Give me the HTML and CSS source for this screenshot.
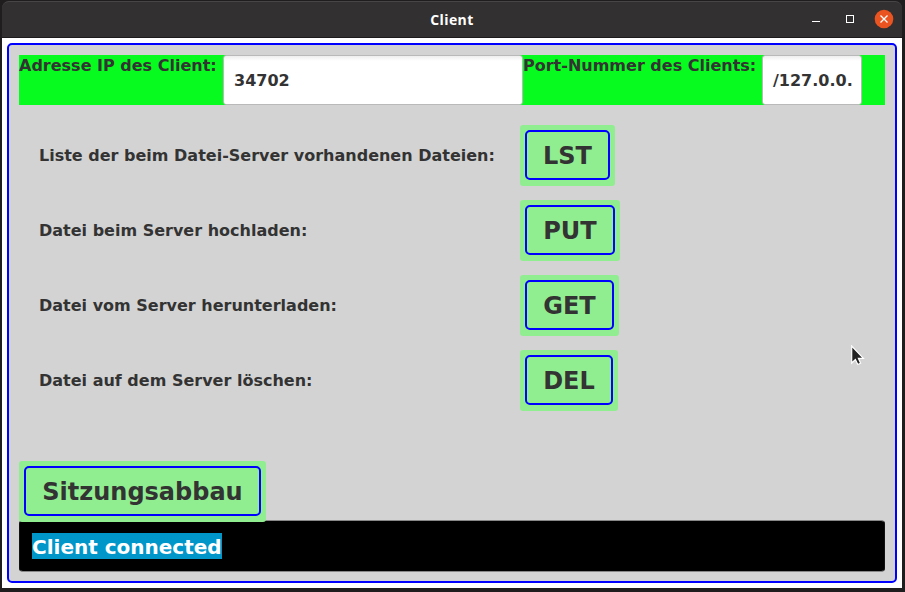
FILE: index.html
```
<!DOCTYPE html>
<html lang="de">
<head>
<meta charset="utf-8">
<title>Client</title>
<link rel="stylesheet" href="styles.css">
</head>
<body>
<div class="window">
  <header class="titlebar">
    <span class="title">Client</span>
    <svg class="controls" width="90" height="35" viewBox="0 0 90 35">
      <path d="M5 19.5h8" stroke="#fff" fill="none"/>
      <rect x="39.5" y="13.5" width="7" height="7" stroke="#fff" fill="none"/>
      <circle cx="77" cy="17" r="9.3" fill="#e95420"/>
      <path d="M73.5 13.5l7 7m0-7l-7 7" stroke="#fff" stroke-width="1.3" fill="none"/>
    </svg>
  </header>
  <main class="content">
    <div class="frame">
      <div class="address">
        <span class="label ip">Adresse IP des Client:</span>
        <div class="field wide">34702</div>
        <span class="label port">Port-Nummer des Clients:</span>
        <div class="field narrow">/127.0.0.</div>
      </div>
      <div class="commands">
        <span>Liste der beim Datei-Server vorhandenen Dateien:</span>
        <button class="btn lst"><b>LST</b></button>
        <span>Datei beim Server hochladen:</span>
        <button class="btn put"><b>PUT</b></button>
        <span>Datei vom Server herunterladen:</span>
        <button class="btn get"><b>GET</b></button>
        <span>Datei auf dem Server löschen:</span>
        <button class="btn del"><b>DEL</b></button>
      </div>
      <button class="btn end"><b>Sitzungsabbau</b></button>
      <div class="console"><span class="selected">Client connected</span></div>
    </div>
  </main>
</div>
<svg class="cursor" width="14" height="21" viewBox="0 0 14 21">
  <path d="M.7 1v17l3.7-3.5 2.4 5 2.8-1.3-2.2-4.9h5z" fill="#222" stroke="#fff" stroke-width="1.2"/>
</svg>
</body>
</html>
```

FILE: styles.css
```
* { box-sizing: border-box; }

body {
  margin: 0;
  width: 905px;
  height: 592px;
  padding: 1px 3px 4px 2px;
  overflow: hidden;
  background: #1f1d1e;
  color: #333;
  font: bold 16px "DejaVu Sans", sans-serif;
}

.window { height: 587px; }

.titlebar {
  height: 37px;
  display: grid;
  grid-template-columns: 1fr auto;
  background: #333031;
  border-top: 1px solid #484546;
  border-bottom: 1px solid #1d1b1c;
  border-radius: 7px 7px 0 0;
}

.title {
  grid-area: 1 / 1 / 2 / 3;
  text-align: center;
  color: #fff;
  font: bold 14px/35px "Open Sans", sans-serif;
  letter-spacing: 0.4px;
}

.controls {
  grid-area: 1 / 2;
  margin-right: 5px;
}

.content {
  height: 550px;
  padding: 5px;
  background: #fff;
}

.frame {
  height: 540px;
  padding: 10px;
  background: #d3d3d3;
  border: 2px solid #00f;
  border-radius: 5px;
}

.address {
  display: flex;
  height: 50px;
  background: #07fb1e;
}

.label { line-height: 22px; white-space: nowrap; }
.ip { width: 204px; }
.port { width: 239px; }

.field {
  height: 50px;
  padding-left: 10px;
  line-height: 49px;
  background: linear-gradient(#eee, #fff 5px);
  border: 1px solid #b9b9b9;
  border-radius: 3px;
  white-space: nowrap;
  overflow: hidden;
}
.wide { width: 300px; }
.narrow { width: 100px; }

.commands {
  display: grid;
  grid-template-columns: 481px auto;
  grid-auto-rows: 61px;
  row-gap: 14px;
  align-items: center;
  justify-content: start;
  margin: 20px 0 50px 20px;
}

.btn {
  display: block;
  height: 61px;
  padding: 5px 5px 6px;
  background: #90ee90;
  border: 0;
  border-radius: 3px;
  color: #333;
  font: bold 24px "DejaVu Sans", sans-serif;
}
.btn b {
  display: block;
  height: 50px;
  line-height: 49px;
  border: 2px solid #00f;
  border-radius: 5px;
}
.lst { width: 95px; }
.put { width: 100px; }
.get { width: 99px; }
.del { width: 98px; }
.end { width: 247px; position: relative; z-index: 1; }

.console {
  height: 52px;
  margin-top: -2px;
  padding: 12px;
  background: #000;
  border: 1px solid;
  border-color: #888 #111;
  border-radius: 4px;
}
.selected {
  display: inline-block;
  height: 26px;
  background: #0096c9;
  color: #fff;
  font-size: 20px;
  line-height: 28px;
}

.cursor { position: absolute; left: 851px; top: 345px; }
```
